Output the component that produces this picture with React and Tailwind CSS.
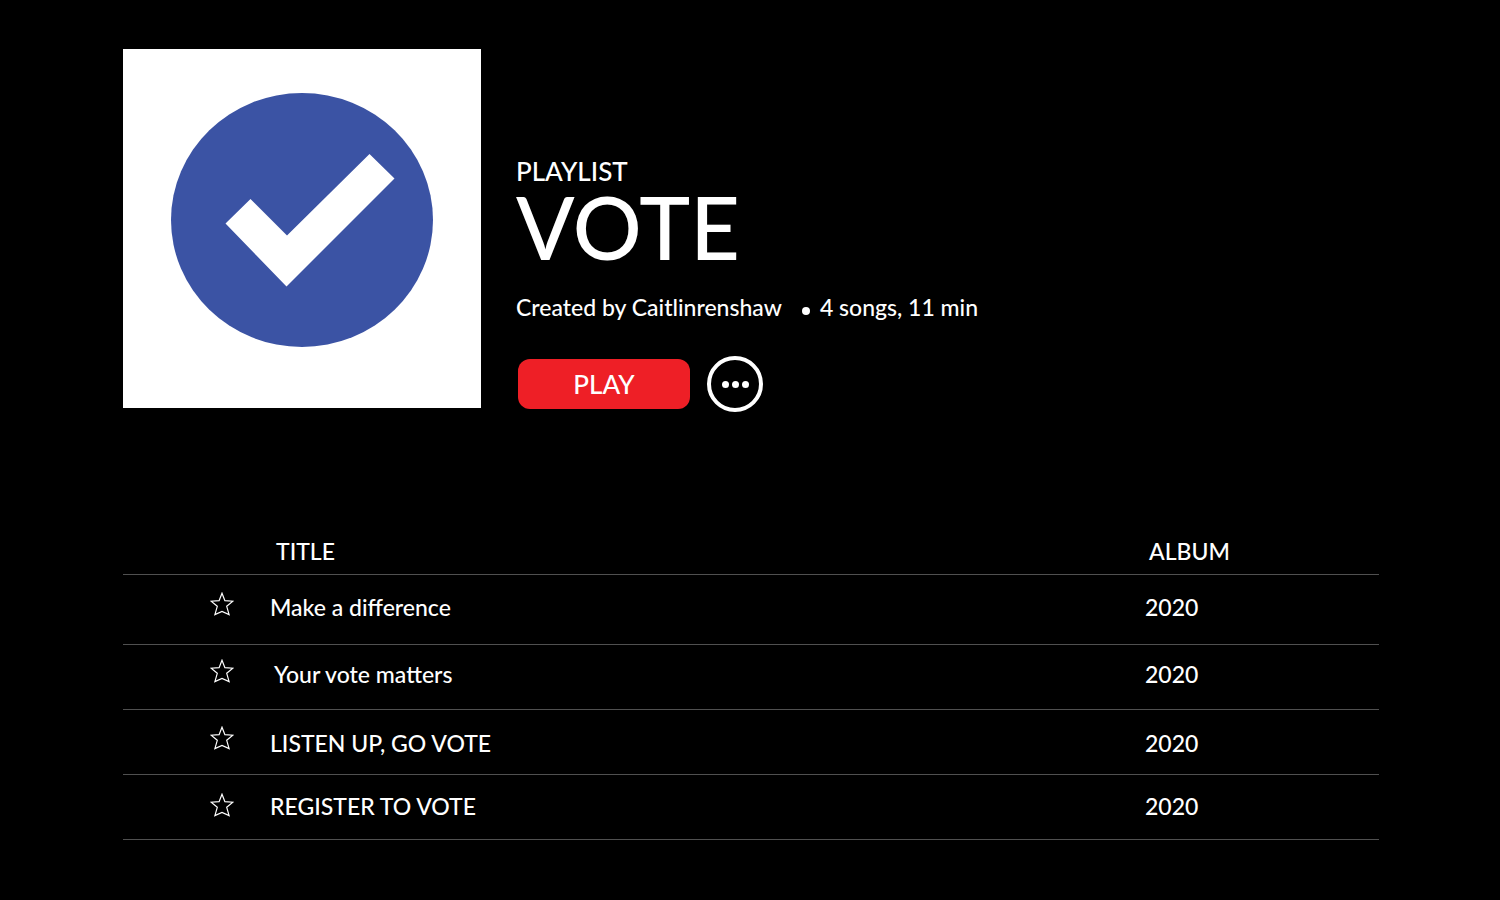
import React, { useState } from 'react';

const songs = [
  { title: 'Make a difference', album: '2020', row: 'h-[70px]', star: 'pb-[10px]', text: 'pb-1', indent: '' },
  { title: 'Your vote matters', album: '2020', row: 'h-[65px]', star: 'pb-3', text: 'pb-1', indent: 'pl-1' },
  { title: 'LISTEN UP, GO VOTE', album: '2020', row: 'h-[65px]', star: 'pb-2', text: 'pt-1', indent: '' },
  { title: 'REGISTER TO VOTE', album: '2020', row: 'h-[65px]', star: 'pb-1', text: 'pb-0', indent: '' },
];

const Cover = () => (
  <svg
    viewBox="0 0 358 359"
    className="h-[359px] w-[358px] shrink-0 self-start bg-white"
    role="img"
    aria-label="Vote playlist cover"
  >
    <ellipse cx="179" cy="171" rx="131" ry="127" fill="#3b53a4" />
    <path d="M102.500 174.500 L127.500 150 L164 186.500 L246.500 105 L271.500 129.500 L163.500 237.500 Z" fill="#fff" />
  </svg>
);

const StarButton = ({ title }) => {
  const [starred, setStarred] = useState(false);

  return (
    <button
      type="button"
      aria-label={`Favorite ${title}`}
      aria-pressed={starred}
      onClick={() => setStarred(!starred)}
      className="block cursor-pointer"
    >
      <svg viewBox="0 0 24 24" className="size-6" fill={starred ? '#fff' : 'none'} stroke="#fff" strokeWidth="1.2">
        <path d="M12 1.200 L14.900 8.700 L22.900 9.200 L16.700 14.300 L19.100 22.600 L12 19.400 L4.900 22.600 L7.300 14.300 L1.100 9.200 L9.100 8.700 Z" />
      </svg>
    </button>
  );
};

const App = () => {
  return (
    <main className="min-h-screen bg-black pt-[49px] pr-[121px] pb-12 pl-[123px] font-['Lato','Liberation_Sans',sans-serif] font-medium text-white">
      <header className="flex gap-[35px]">
        <Cover />
        <div className="pt-[106px]">
          <p className="text-[26px] leading-8">PLAYLIST</p>
          <h1 className="text-[86px] leading-20">VOTE</h1>
          <p className="mt-6 flex items-center text-[23px] leading-8">
            <span>Created by Caitlinrenshaw</span>
            <span className="mt-2 mr-[10px] ml-5 size-2 rounded-full bg-white" />
            <span>4 songs, 11 min</span>
          </p>
          <div className="mt-[33px] ml-[2px] flex items-center gap-[17px]">
            <button type="button" className="h-[50px] w-[172px] cursor-pointer rounded-xl bg-[#ee1f26] text-[26px]">
              PLAY
            </button>
            <button
              type="button"
              aria-label="More options"
              className="flex size-14 cursor-pointer items-center justify-center gap-[3px] rounded-full border-4 border-white"
            >
              <span className="size-[7px] rounded-full bg-white" />
              <span className="size-[7px] rounded-full bg-white" />
              <span className="size-[7px] rounded-full bg-white" />
            </button>
          </div>
        </div>
      </header>

      <table className="mt-28 w-full table-fixed border-collapse text-left text-[23px]">
        <thead>
          <tr className="h-[50px] border-b border-[#505050]">
            <th className="w-[147px]" aria-label="Favorite" />
            <th className="pt-1 pl-[6px] font-medium">TITLE</th>
            <th className="w-[234px] pt-1 pl-1 font-medium">ALBUM</th>
          </tr>
        </thead>
        <tbody>
          {songs.map(song => (
            <tr key={song.title} className={`${song.row} border-b border-[#505050]`}>
              <td className={`pl-[87px] ${song.star}`}>
                <StarButton title={song.title} />
              </td>
              <td className={`${song.text} ${song.indent}`}>{song.title}</td>
              <td className={song.text}>{song.album}</td>
            </tr>
          ))}
        </tbody>
      </table>
    </main>
  );
};

export default App;
